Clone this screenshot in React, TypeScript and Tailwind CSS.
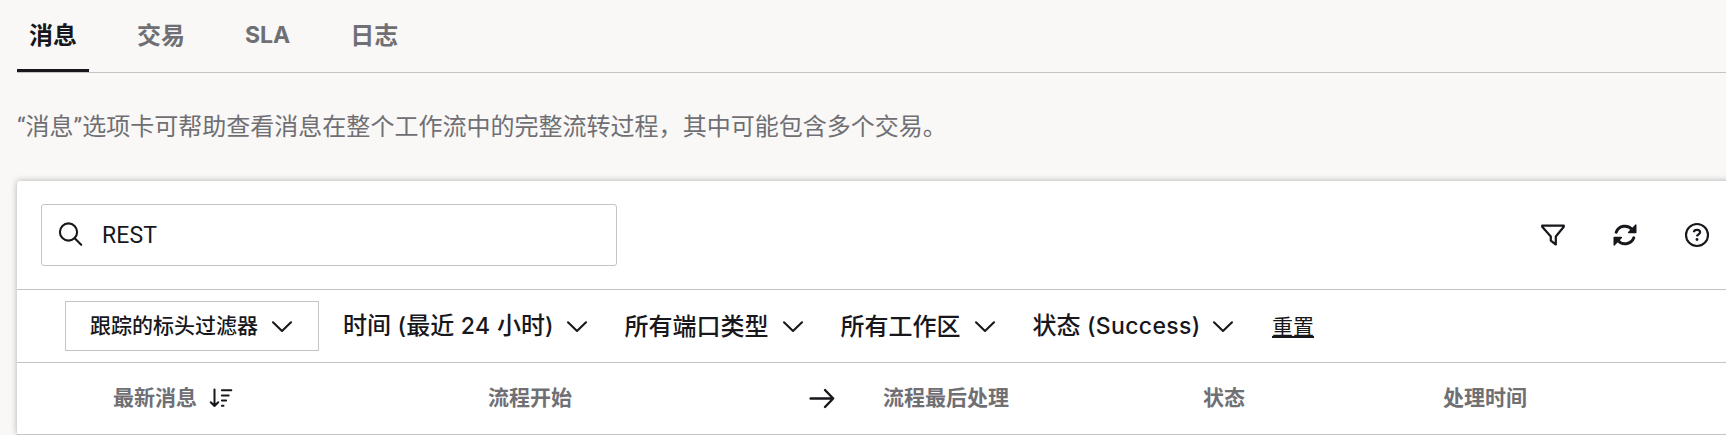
import type { ReactNode } from 'react'

const tabs = [
  { id: 'messages', label: '消息' },
  { id: 'transactions', label: '交易' },
  { id: 'sla', label: 'SLA' },
  { id: 'logs', label: '日志' }
]

const filters = [
  { id: 'time', label: '时间 (最近 24 小时)', width: 'w-[209.5px]' },
  { id: 'port', label: '所有端口类型', width: 'w-36' },
  { id: 'workspace', label: '所有工作区', width: 'w-30' },
  { id: 'status', label: '状态 (Success)', width: 'w-[166.5px]' }
]

// Latin runs are set in Inter, slightly smaller than the Chinese glyphs
function MixedText({ text, className = '' }: { text: string; className?: string }) {
  return text.split(/([ -~]+)/).map((part, i) =>
    i % 2 === 1 ? (
      <span key={i} className={`font-[Inter] text-[23px] whitespace-pre ${className}`}>
        {part}
      </span>
    ) : (
      part
    )
  )
}

function Icon({ children, strokeWidth = 2 }: { children: ReactNode; strokeWidth?: number }) {
  return (
    <svg
      className="block size-6 shrink-0 overflow-visible"
      viewBox="0 0 24 24"
      fill="none"
      stroke="currentColor"
      strokeWidth={strokeWidth}
      strokeLinecap="round"
      strokeLinejoin="round"
      aria-hidden="true"
    >
      {children}
    </svg>
  )
}

function ChevronIcon() {
  return (
    <Icon strokeWidth={2.1}>
      <path d="M3 8.3 12 17 21 8.3" />
    </Icon>
  )
}

function Toolbar() {
  return (
    <div className="flex h-[109px] items-start justify-between border-b border-[#c4c4c4] pt-[23px] pr-[17px] pl-6">
      <label className="flex h-[62px] w-[576px] items-center rounded-[3px] border border-[#c4c4c4] pl-[17px]">
        <Icon strokeWidth={2.1}>
          <circle cx="9.5" cy="9" r="8.6" />
          <path d="m15.7 15.3 6.5 6.5" />
        </Icon>
        <input
          className="ml-[19px] w-[480px] bg-transparent pt-0.5 font-[Roboto] text-[23px] tracking-[0.1px] outline-none"
          defaultValue="REST"
          aria-label="搜索"
        />
      </label>
      <div className="flex h-[62px] items-center gap-12">
        <button aria-label="过滤器">
          <Icon strokeWidth={2.2}>
            <path d="M1.2 2.6h21.6v1.2L14.8 13.5v8l-5-3.8v-4.2L1.2 3.8z" />
          </Icon>
        </button>
        <button aria-label="刷新">
          <Icon strokeWidth={3}>
            <path d="M3.2 9.2A9.4 9.4 0 0 1 19.2 6.6M20.8 14.8A9.4 9.4 0 0 1 4.8 17.4" />
            <path d="M22.7 2.2v7.3h-7zM1.3 21.8v-7.3h7z" fill="currentColor" strokeWidth="1.6" />
          </Icon>
        </button>
        <button aria-label="帮助">
          <Icon strokeWidth={2.1}>
            <circle cx="12" cy="12" r="11" />
            <path d="M8.9 9.2c.2-3.3 6.2-3.1 6.2 0 0 2-2.9 2.2-3.1 4.1" strokeWidth="2.2" strokeLinecap="butt" />
            <circle cx="12" cy="16.5" r="1.4" fill="currentColor" stroke="none" />
          </Icon>
        </button>
      </div>
    </div>
  )
}

function FilterBar() {
  return (
    <div className="flex h-[73px] items-center border-b border-[#c4c4c4] pl-12 font-medium">
      <button className="mr-6 flex h-[50px] w-[254px] items-center gap-3 border border-[#c4c4c4] pl-6 text-[21px] leading-8">
        <span className="relative -top-0.5">跟踪的标头过滤器</span>
        <ChevronIcon />
      </button>
      {filters.map((filter) => (
        <button key={filter.id} className="mr-9 flex items-center gap-3 text-2xl whitespace-nowrap">
          <span className={`relative -top-px text-left ${filter.width}`}>
            <MixedText text={filter.label} className="tracking-[0.35px]" />
          </span>
          <ChevronIcon />
        </button>
      ))}
      <button className="ml-px text-[21px] font-normal underline decoration-2 underline-offset-2">重置</button>
    </div>
  )
}

function TableHeader() {
  return (
    <div className="grid h-[72px] grid-cols-[375px_321px_74px_320px_240px_1fr] items-center border-b border-[#c4c4c4] pb-px pl-24 text-[21px] font-bold text-[#6f6f74]">
      <div className="flex items-center gap-3">
        <span className="relative -top-px">最新消息</span>
        <span className="text-[#17171c]">
          <Icon>
            <path d="M5.5 3.5V20M1.8 16.2 5.5 20l3.7-3.8M12.9 4.2h9.4M12.9 9.4h6.8M12.9 14.6h4.2M12.9 19.8h1.6" />
          </Icon>
        </span>
      </div>
      <span className="relative -top-px">流程开始</span>
      <span className="text-[#17171c]">
        <Icon strokeWidth={2.4}>
          <path d="M1.6 12.5H24M16 4l8.2 8.5L16 21" />
        </Icon>
      </span>
      <span className="relative -top-px">流程最后处理</span>
      <span className="relative -top-px">状态</span>
      <span className="relative -top-px">处理时间</span>
    </div>
  )
}

export default function App() {
  return (
    <main className="h-[435px] overflow-hidden bg-[#f9f8f6] pl-[17px] font-['Noto_Sans_CJK_SC',sans-serif] text-[#17171c]">
      <nav className="flex h-[73px] items-stretch gap-9 border-b border-[#c4c4c4]">
        {tabs.map((tab, index) => (
          <button
            key={tab.id}
            className={`border-b-3 px-3 pb-px text-2xl font-bold ${
              index === 0 ? 'border-[#17171c]' : 'border-transparent text-[#6f6f74]'
            }`}
          >
            <MixedText text={tab.label} />
          </button>
        ))}
      </nav>

      <p className="flex h-[108px] items-center font-[Roboto,'Noto_Sans_CJK_SC',sans-serif] text-2xl tracking-[0.02px] text-[#6f6f74]">
        “消息”选项卡可帮助查看消息在整个工作流中的完整流转过程，其中可能包含多个交易。
      </p>

      <section className="-mr-3 rounded-[3px] bg-white pr-3 shadow-[0_0_6px_rgba(0,0,0,0.3)]">
        <Toolbar />
        <FilterBar />
        <TableHeader />
      </section>
    </main>
  )
}
